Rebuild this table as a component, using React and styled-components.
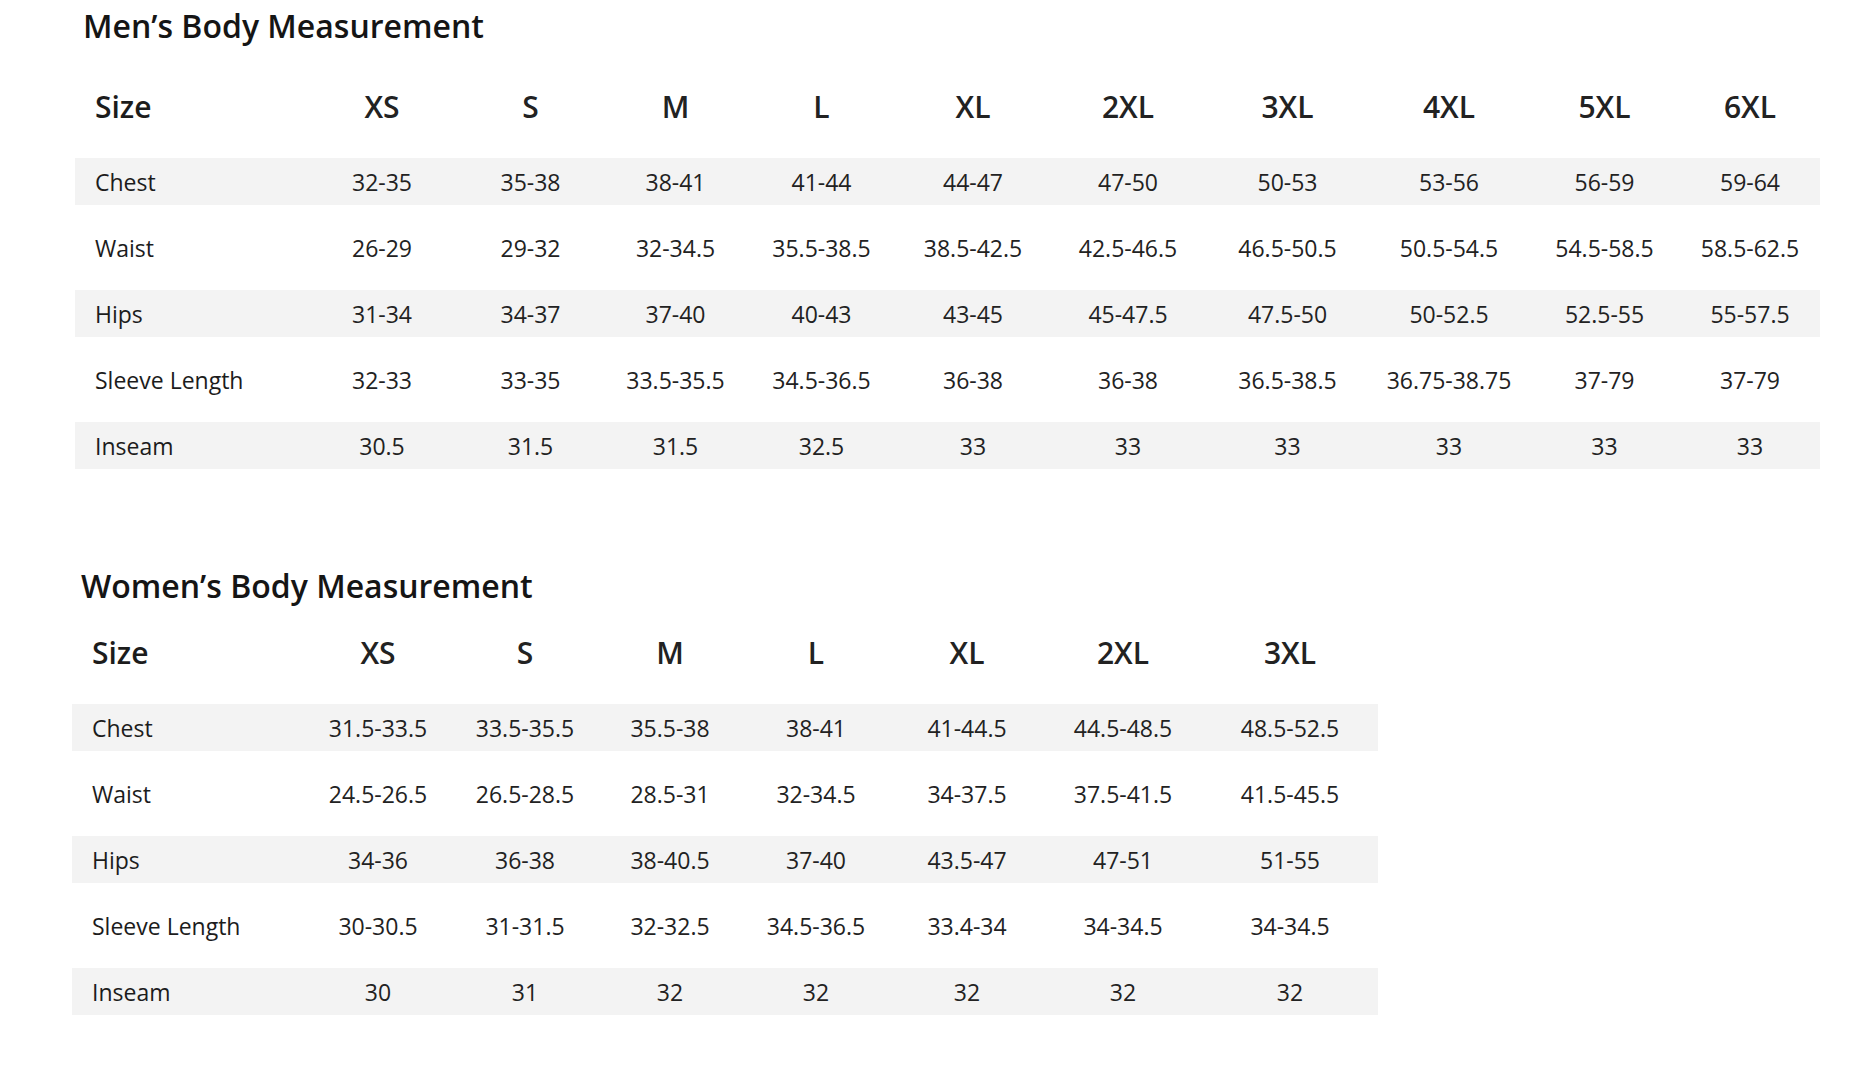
import React from 'react';
import styled, { createGlobalStyle } from 'styled-components';

const GlobalStyle = createGlobalStyle`
  body {
    margin: 0;
    background: #ffffff;
    font-family: "Open Sans", "Noto Sans", Arial, sans-serif;
    color: #1c1c1c;
  }
`;

const Page = styled.div`
  width: 1862px;
  padding-top: 8px;
  display: flex;
  flex-direction: column;
`;

const Section = styled.section`
  display: flex;
  flex-direction: column;
  align-items: flex-start;
  padding-left: ${p => p.$left}px;
  margin-top: ${p => p.$top || 0}px;
`;

const Title = styled.h2`
  margin: 0 0 ${p => p.$gap}px ${p => p.$indent}px;
  height: 36px;
  line-height: 36px;
  font-size: 32px;
  font-weight: 600;
  color: #151515;
`;

const Table = styled.div`
  display: flex;
  flex-direction: column;
  gap: 19px;
`;

const Row = styled.div`
  display: grid;
  grid-template-columns: ${p => p.$cols};
  align-items: center;
  height: ${p => (p.$head ? 66 : 47)}px;
  background: ${p => (p.$shade ? '#f3f3f3' : 'transparent')};
`;

const Label = styled.div`
  padding-left: 20px;
  font-size: ${p => (p.$head ? 30 : 23)}px;
  font-weight: ${p => (p.$head ? 600 : 400)};
  color: #1c1c1c;
`;

const Cell = styled.div`
  text-align: center;
  font-size: ${p => (p.$head ? 30 : 23)}px;
  font-weight: ${p => (p.$head ? 600 : 400)};
  color: #222222;
  white-space: nowrap;
`;

const menCols = '232px 150px 147px 143px 149px 154px 156px 163px 160px 151px 140px';
const womenCols = '232px 148px 146px 144px 148px 154px 158px 176px';

const men = {
  sizes: ['XS', 'S', 'M', 'L', 'XL', '2XL', '3XL', '4XL', '5XL', '6XL'],
  rows: [
    ['Chest', '32-35', '35-38', '38-41', '41-44', '44-47', '47-50', '50-53', '53-56', '56-59', '59-64'],
    ['Waist', '26-29', '29-32', '32-34.5', '35.5-38.5', '38.5-42.5', '42.5-46.5', '46.5-50.5', '50.5-54.5', '54.5-58.5', '58.5-62.5'],
    ['Hips', '31-34', '34-37', '37-40', '40-43', '43-45', '45-47.5', '47.5-50', '50-52.5', '52.5-55', '55-57.5'],
    ['Sleeve Length', '32-33', '33-35', '33.5-35.5', '34.5-36.5', '36-38', '36-38', '36.5-38.5', '36.75-38.75', '37-79', '37-79'],
    ['Inseam', '30.5', '31.5', '31.5', '32.5', '33', '33', '33', '33', '33', '33'],
  ],
};

const women = {
  sizes: ['XS', 'S', 'M', 'L', 'XL', '2XL', '3XL'],
  rows: [
    ['Chest', '31.5-33.5', '33.5-35.5', '35.5-38', '38-41', '41-44.5', '44.5-48.5', '48.5-52.5'],
    ['Waist', '24.5-26.5', '26.5-28.5', '28.5-31', '32-34.5', '34-37.5', '37.5-41.5', '41.5-45.5'],
    ['Hips', '34-36', '36-38', '38-40.5', '37-40', '43.5-47', '47-51', '51-55'],
    ['Sleeve Length', '30-30.5', '31-31.5', '32-32.5', '34.5-36.5', '33.4-34', '34-34.5', '34-34.5'],
    ['Inseam', '30', '31', '32', '32', '32', '32', '32'],
  ],
};

const SizeTable = ({ data, cols }) => (
  <Table>
    <Row $head $cols={cols}>
      <Label $head>Size</Label>
      {data.sizes.map(s => (
        <Cell $head key={s}>{s}</Cell>
      ))}
    </Row>
    {data.rows.map(([name, ...values], i) => (
      <Row key={name} $cols={cols} $shade={i % 2 === 0}>
        <Label>{name}</Label>
        {values.map((v, j) => (
          <Cell key={j}>{v}</Cell>
        ))}
      </Row>
    ))}
  </Table>
);

const App = () => (
  <>
    <GlobalStyle />
    <Page>
      <Section $left={75}>
        <Title $indent={8} $gap={29}>Men’s Body Measurement</Title>
        <SizeTable data={men} cols={menCols} />
      </Section>
      <Section $left={72} $top={99}>
        <Title $indent={9} $gap={15}>Women’s Body Measurement</Title>
        <SizeTable data={women} cols={womenCols} />
      </Section>
    </Page>
  </>
);

export default App;
